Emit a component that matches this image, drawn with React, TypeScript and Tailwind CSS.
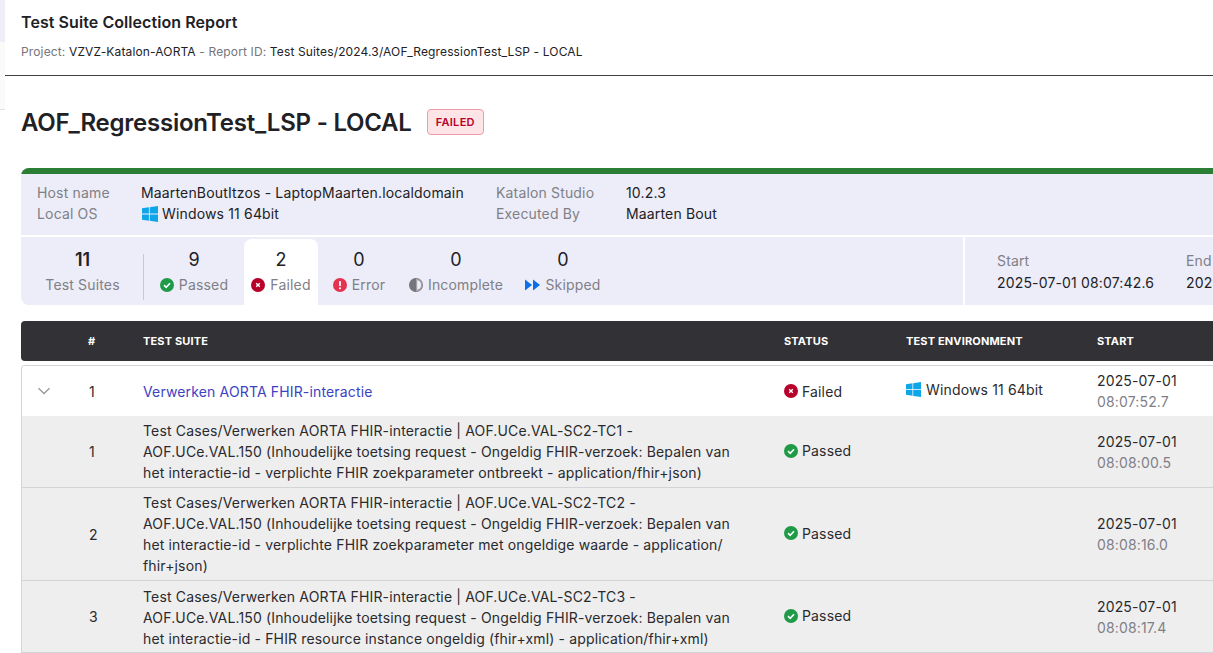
const FONT = "font-['Inter','Liberation_Sans',sans-serif]";

function WinIcon({ size = 16 }: { size?: number }) {
  return (
    <svg width={size} height={size} viewBox="0 0 16 16" className="shrink-0">
      <path fill="#0ea5e9" d="M0 2.3 6.9 1.3V7.6H0Z" />
      <path fill="#0ea5e9" d="M7.7 1.2 16 0V7.6H7.7Z" />
      <path fill="#0ea5e9" d="M0 8.4H6.9V14.7L0 13.7Z" />
      <path fill="#0ea5e9" d="M7.7 8.4H16V16L7.7 14.8Z" />
    </svg>
  );
}
function PassIcon() {
  return (
    <svg width="14" height="14" viewBox="0 0 14 14" className="shrink-0">
      <circle cx="7" cy="7" r="7" fill="#1f9a46" />
      <path d="M4 7.2 6.2 9.3 10 5.2" fill="none" stroke="#fff" strokeWidth="1.6" />
    </svg>
  );
}
function FailIcon() {
  return (
    <svg width="14" height="14" viewBox="0 0 14 14" className="shrink-0">
      <circle cx="7" cy="7" r="7" fill="#b7002a" />
      <path d="M5.2 5.2 8.8 8.8M8.8 5.2 5.2 8.8" fill="none" stroke="#fff" strokeWidth="1.4" />
    </svg>
  );
}
function ErrorIcon() {
  return (
    <svg width="14" height="14" viewBox="0 0 14 14" className="shrink-0">
      <circle cx="7" cy="7" r="7" fill="#e5324f" />
      <rect x="6.1" y="3" width="1.8" height="5.2" rx="0.6" fill="#fff" />
      <circle cx="7" cy="10.2" r="1" fill="#fff" />
    </svg>
  );
}
function IncompleteIcon() {
  return (
    <svg width="14" height="14" viewBox="0 0 14 14" className="shrink-0">
      <circle cx="7" cy="7" r="6.4" fill="#eceDf8" stroke="#77757c" strokeWidth="1.2" />
      <path d="M7 0.6A6.4 6.4 0 0 0 7 13.4Z" fill="#77757c" />
      <path d="M7 0.6A6.4 6.4 0 0 1 7 13.4Z" fill="#a3a2a8" />
      <path d="M8.2 2.3A4.8 4.8 0 0 1 8.2 11.7Z" fill="#eceDf8" />
    </svg>
  );
}
function SkipIcon() {
  return (
    <svg width="15" height="12" viewBox="0 0 15 12" className="shrink-0">
      <path d="M0 0.5 7 6 0 11.5Z" fill="#0b6fe8" />
      <path d="M8 0.5 15 6 8 11.5Z" fill="#0b6fe8" />
    </svg>
  );
}
function Chevron() {
  return (
    <svg width="14" height="8" viewBox="0 0 14 8">
      <path d="M1.5 1.2 7 6.5 12.5 1.2" fill="none" stroke="#9a9a9f" strokeWidth="1.4" />
    </svg>
  );
}

function Stat({ n, icon, label, active, w }: { n: string; icon: React.ReactNode; label: string; active?: boolean; w: string }) {
  return (
    <div className={`${w} flex flex-col items-center pt-[7px] rounded-t-[8px] ${active ? "bg-white" : ""}`}>
      <div className="text-[18px] leading-[28px] text-[#212125]">{n}</div>
      <div className="flex items-center gap-[5px] text-[14px] leading-[20px] mt-[1px] text-[#807f87] tracking-[0.16px]">
        {icon}
        <span>{label}</span>
      </div>
    </div>
  );
}

function Row({ n, lines, time, h, textClass = "" }: { n: string; lines: string[]; time: string; h: string; textClass?: string }) {
  return (
    <div className={`grid grid-cols-[121px_641px_122px_191px_200px] ${h} bg-[#eeeeee] border-b border-[#d4d4d6] items-center text-[14px] leading-[21px] text-[#2a2a2e] tracking-[0.15px]`}>
      <div className="pl-[67px]">{n}</div>
      <div className={textClass}>
        {lines.map((l) => (
          <div key={l} className="whitespace-nowrap">{l}</div>
        ))}
      </div>
      <div className="flex items-center gap-[4px] -mt-[2px]">
        <PassIcon />
        <span>Passed</span>
      </div>
      <div />
      <div>
        <div>2025-07-01</div>
        <div className="text-[#807f87]">{time}</div>
      </div>
    </div>
  );
}

export default function App() {
  return (
    <div className={`${FONT} flex w-[1213px] h-[653px] overflow-hidden bg-white`}>
      <div className="w-[5px] shrink-0 flex flex-col">
        <div className="h-[42px] bg-[#eeeff6]" />
        <div className="h-[68px] bg-[#fafafa] border-b border-[#e2e2e4]" />
      </div>
      <main className="flex-1 min-w-0">
        <header className="h-[76px] border-b border-[#3f3f44] pl-[16px] pt-[12px]">
          <h1 className="text-[16px] leading-[20px] font-semibold text-[#212125] tracking-[0.07px]">Test Suite Collection Report</h1>
          <p className="mt-[11px] text-[12px] leading-[18px] text-[#212125] whitespace-nowrap tracking-[0.14px]">
            <span className="text-[#76757c]">Project: </span>VZVZ-Katalon-AORTA<span className="text-[#76757c]"> - Report ID: </span>Test Suites/2024.3/AOF_RegressionTest_LSP - LOCAL
          </p>
        </header>
        <div className="pl-[16px] w-[1400px]">
          <div className="flex items-center h-[92px] pt-[1px]">
            <h2 className="text-[24px] leading-[32px] font-semibold text-[#212125] tracking-[-0.23px]">AOF_RegressionTest_LSP - LOCAL</h2>
            <span className="ml-[15px] mb-[2px] h-[26px] px-[8px] pt-[1px] flex items-center rounded-[4px] border border-[#ee9aa8] bg-[#fde4e7] text-[11px] font-semibold text-[#b7002a] tracking-[0.3px]">FAILED</span>
          </div>

          <section className="rounded-[8px] overflow-hidden bg-[#ecedf8]">
            <div className="h-[6px] bg-[#2b7f35]" />
            <div className="h-[61px] pl-[16px] pt-[8px] text-[14px] leading-[21px] grid grid-cols-[104px_355px_130px_1fr] content-start text-[#212125] tracking-[0.16px]">
              <div className="text-[#807f87]">Host name</div>
              <div>MaartenBoutItzos - LaptopMaarten.localdomain</div>
              <div className="text-[#807f87]">Katalon Studio</div>
              <div>10.2.3</div>
              <div className="text-[#807f87]">Local OS</div>
              <div className="flex items-center gap-[4px] pl-[1px]"><WinIcon size={16} />Windows 11 64bit</div>
              <div className="text-[#807f87]">Executed By</div>
              <div>Maarten Bout</div>
            </div>
            <div className="h-[2px] bg-white" />
            <div className="flex h-[68px]">
              <div className="w-[942px] flex pt-[2px]">
                <div className="w-[123px] flex flex-col items-center pt-[7px] relative">
                  <div className="text-[18px] leading-[28px] font-semibold text-[#212125]">11</div>
                  <div className="text-[14px] leading-[20px] mt-[1px] text-[#807f87] tracking-[0.16px]">Test Suites</div>
                  <div className="absolute right-0 top-[15px] h-[46px] w-px bg-[#c9c9d0]" />
                </div>
                <Stat w="w-[100px]" n="9" icon={<PassIcon />} label="Passed" />
                <Stat w="w-[74px]" active n="2" icon={<FailIcon />} label="Failed" />
                <Stat w="w-[82px]" n="0" icon={<ErrorIcon />} label="Error" />
                <Stat w="w-[112px]" n="0" icon={<IncompleteIcon />} label="Incomplete" />
                <Stat w="w-[102px]" n="0" icon={<SkipIcon />} label="Skipped" />
              </div>
              <div className="w-[2px] bg-white" />
              <div className="flex pl-[32px] pt-[13px] text-[14px] leading-[21px] text-[#212125] tracking-[0.16px]">
                <div className="w-[189px]">
                  <div className="text-[#807f87]">Start</div>
                  <div className="mt-[1px]">2025-07-01 08:07:42.6</div>
                </div>
                <div>
                  <div className="text-[#807f87]">End</div>
                  <div className="mt-[1px]">2025-07-01 08:08:40.1</div>
                </div>
              </div>
            </div>
          </section>

          <div className="mt-[16px] h-[40px] rounded-[4px] bg-[#323135] text-white text-[11px] font-bold tracking-[0.15px] grid grid-cols-[122px_641px_122px_191px_200px] items-center">
            <div className="pl-[67px]">#</div>
            <div>TEST SUITE</div>
            <div>STATUS</div>
            <div>TEST ENVIRONMENT</div>
            <div>START</div>
          </div>

          <div className="mt-[4px] rounded-t-[4px] border-t border-l border-[#d4d4d6] overflow-hidden">
            <div className="grid grid-cols-[121px_641px_122px_191px_200px] h-[50px] items-center text-[14px] leading-[21px] text-[#2a2a2e] bg-white tracking-[0.15px]">
              <div className="flex items-center">
                <div className="w-[67px] pl-[15px]"><Chevron /></div>
                <span>1</span>
              </div>
              <div className="text-[#3d42c4]">Verwerken AORTA FHIR-interactie</div>
              <div className="flex items-center gap-[4px]"><FailIcon /><span>Failed</span></div>
              <div className="flex items-center gap-[5px] -mt-[4px]"><WinIcon size={15} /><span>Windows 11 64bit</span></div>
              <div>
                <div>2025-07-01</div>
                <div className="text-[#807f87]">08:07:52.7</div>
              </div>
            </div>
            <Row h="h-[72px]" n="1" time="08:08:00.5" lines={[
              "Test Cases/Verwerken AORTA FHIR-interactie | AOF.UCe.VAL-SC2-TC1 -",
              "AOF.UCe.VAL.150 (Inhoudelijke toetsing request - Ongeldig FHIR-verzoek: Bepalen van",
              "het interactie-id - verplichte FHIR zoekparameter ontbreekt - application/fhir+json)",
            ]} />
            <Row h="h-[93px]" n="2" time="08:08:16.0" lines={[
              "Test Cases/Verwerken AORTA FHIR-interactie | AOF.UCe.VAL-SC2-TC2 -",
              "AOF.UCe.VAL.150 (Inhoudelijke toetsing request - Ongeldig FHIR-verzoek: Bepalen van",
              "het interactie-id - verplichte FHIR zoekparameter met ongeldige waarde - application/",
              "fhir+json)",
            ]} />
            <Row h="h-[72px]" n="3" time="08:08:17.4" textClass="mt-[2px]" lines={[
              "Test Cases/Verwerken AORTA FHIR-interactie | AOF.UCe.VAL-SC2-TC3 -",
              "AOF.UCe.VAL.150 (Inhoudelijke toetsing request - Ongeldig FHIR-verzoek: Bepalen van",
              "het interactie-id - FHIR resource instance ongeldig (fhir+xml) - application/fhir+xml)",
            ]} />
          </div>
        </div>
      </main>
    </div>
  );
}
